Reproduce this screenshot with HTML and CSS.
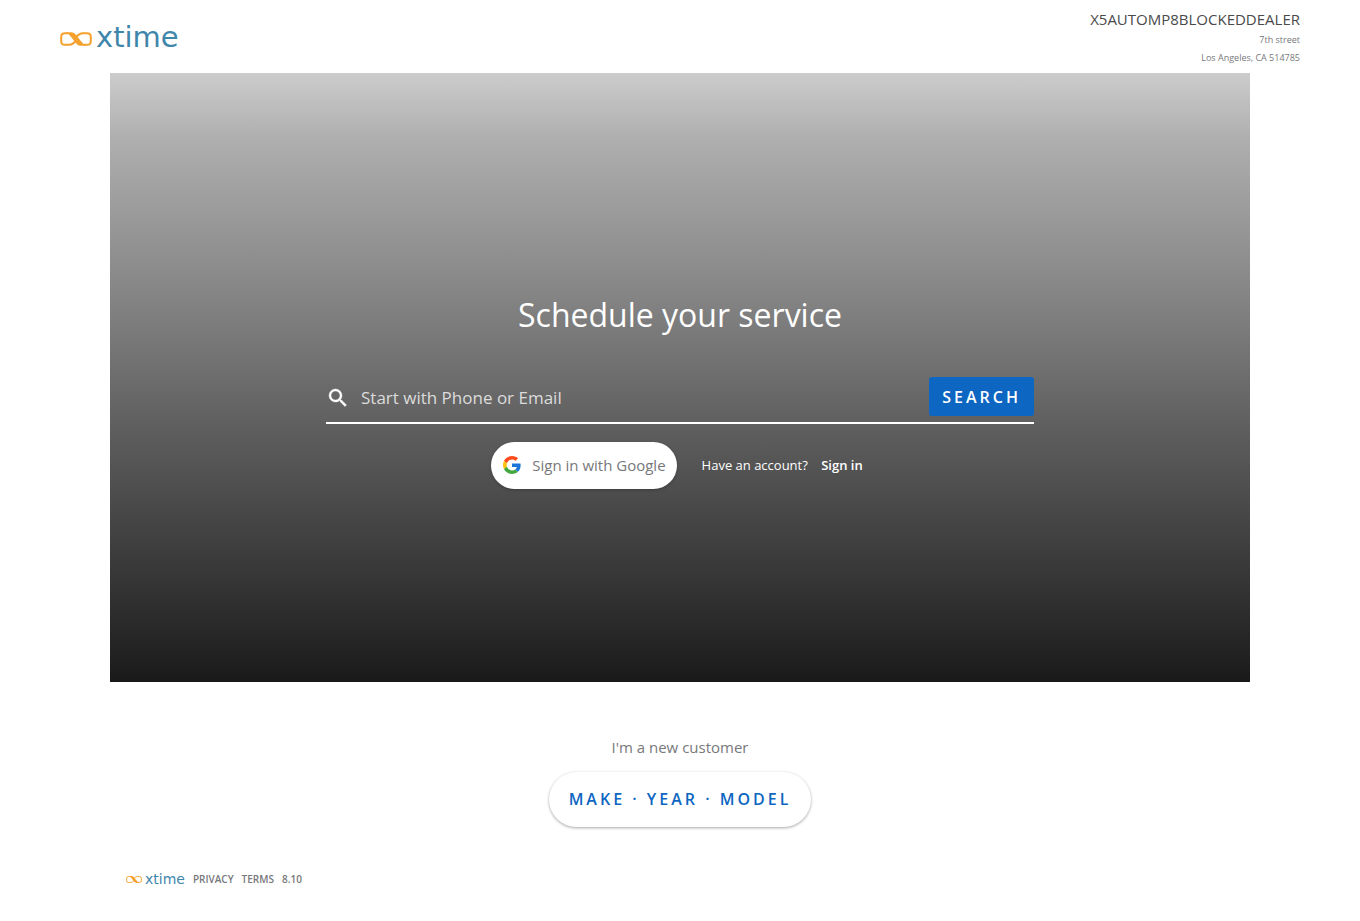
FILE: index.html
```html
<!DOCTYPE html>
<html lang="en">
<head>
<meta charset="utf-8">
<title>Schedule your service</title>
<link rel="stylesheet" href="styles.css">
</head>
<body>
<svg class="defs" aria-hidden="true">
  <symbol id="loop" viewBox="0 0 32 14">
    <path d="M8 1.200H5Q1.200 1.200 1.200 4.800v4.400Q1.200 12.800 5 12.800H9.500C12 12.800 13.500 11.500 15.500 9.500" fill="none" stroke="#f5a12d" stroke-width="2"/>
    <path d="M24 12.800h3Q30.800 12.800 30.800 9.200v-4.400Q30.800 1.200 27 1.200H22.500C20 1.200 18.500 2.500 16.500 4.500" fill="none" stroke="#f5a12d" stroke-width="2"/>
    <path d="M6 .2H11.500C16.500 .2 19.500 9.500 26 13.800H20.500C15.500 13.800 12.500 4 6 .2z" fill="#f5a12d"/>
  </symbol>
</svg>
<header class="top">
  <div class="logo"><svg class="loop" aria-hidden="true"><use href="#loop"/></svg><span>xtime</span></div>
  <address class="dealer">
    <span class="dealer-name">X5AUTOMP8BLOCKEDDEALER</span>
    <span>7th street</span>
    <span>Los Angeles, CA 514785</span>
  </address>
</header>
<main>
  <section class="hero">
    <h1>Schedule your service</h1>
    <form class="search">
      <label for="q" aria-label="Phone or Email"><svg class="glass" viewBox="0 0 24 24" aria-hidden="true"><path fill="#fff" stroke="#fff" stroke-width=".4" d="M15.500 14h-.79l-.28-.27A6.470 6.470 0 0 0 16 9.500 6.500 6.500 0 1 0 9.500 16c1.610 0 3.090-.59 4.230-1.570l.27.28v.79l5 4.990L20.490 19l-4.990-5zm-6 0C7.010 14 5 11.990 5 9.500S7.010 5 9.500 5 14 7.010 14 9.500 11.990 14 9.500 14z"/></svg></label>
      <input id="q" type="text" placeholder="Start with Phone or Email">
      <button type="button" class="go">SEARCH</button>
    </form>
    <div class="signin">
      <button type="button" class="google">
        <svg class="g" viewBox="0 0 48 48" aria-hidden="true"><path fill="#ff4a1c" d="M24 9.500c3.540 0 6.710 1.220 9.210 3.600l6.850-6.850C35.900 2.380 30.470 0 24 0 14.620 0 6.510 5.380 2.560 13.220l7.980 6.190C12.430 13.720 17.740 9.500 24 9.500z"/><path fill="#1a73d9" d="M46.980 24.550c0-1.570-.15-3.090-.38-4.550H24v9.020h12.940c-.58 2.960-2.260 5.480-4.780 7.180l7.730 6c4.510-4.180 7.090-10.360 7.090-17.650z"/><path fill="#ffc107" d="M10.530 28.590A14.500 14.500 0 0 1 9.770 24c0-1.600.27-3.140.76-4.590l-7.980-6.190A23.900 23.900 0 0 0 0 24c0 3.880.92 7.540 2.560 10.780z"/><path fill="#43a83f" d="M24 48c6.480 0 11.930-2.130 15.890-5.810l-7.730-6C30.010 37.640 27.240 38.490 24 38.490c-6.260 0-11.570-4.220-13.470-9.910l-7.980 6.190C6.510 42.620 14.620 48 24 48z"/></svg>
        Sign in with Google
      </button>
      <p class="account">Have an account? <a href="#signin">Sign in</a></p>
    </div>
  </section>
  <section class="new">
    <p>I'm a new customer</p>
    <button type="button" class="vehicle">MAKE · YEAR · MODEL</button>
  </section>
</main>
<footer class="foot">
  <div class="logo small"><svg class="loop" aria-hidden="true"><use href="#loop"/></svg><span>xtime</span></div>
  <a href="#privacy">PRIVACY</a>
  <a href="#terms">TERMS</a>
  <span>8.10</span>
</footer>
</body>
</html>
```
FILE: styles.css
```css
* { box-sizing: border-box; }
body { margin: 0; font-family: "Open Sans", sans-serif; color: #77787b; background: #fff; }
p, h1 { margin: 0; }
a { color: inherit; text-decoration: none; }
button { border: 0; font-family: inherit; cursor: pointer; }
.defs { position: absolute; width: 0; height: 0; }

.top { display: flex; justify-content: space-between; padding: 8px 60px 6px; }
.logo { display: flex; align-items: center; gap: 4px; color: #3f86ab; font: 29px/28px "DejaVu Sans", sans-serif; }
.top .logo { height: 58px; }
.loop { width: 32px; height: 14px; margin-top: 4px; }
.dealer { display: flex; flex-direction: column; align-items: flex-end; font-style: normal; font-size: 9px; line-height: 18px; }
.dealer-name { margin-bottom: 1px; font-size: 15px; line-height: 22px; color: #4a4a4a; }

.hero {
  display: flex; flex-direction: column; align-items: center;
  margin: 0 110px; padding: 218px 24px 193px; color: #fff;
  background: linear-gradient(#ccc, #aeaeae 11%, #878787 35%, #5f5f5f 58%, #4b4b4b 70%, #212121 96%, #191919);
}
h1 { font-size: 32px; line-height: 48px; font-weight: 400; }
.search { display: flex; align-items: center; width: 100%; max-width: 708px; margin-top: 38px; padding-bottom: 6px; border-bottom: 2px solid #fff; }
.search label { display: flex; padding-top: 2px; }
.glass { width: 24px; height: 24px; }
.search input { flex: 1; min-width: 0; padding: 2px 11px 0; border: 0; outline: 0; background: none; color: #fff; font: 17px/24px "Open Sans", sans-serif; }
.search input::placeholder { color: #dcdcdc; opacity: 1; }
.go { height: 39px; padding: 0 13px; border-radius: 3px; background: #0d66c2; color: #fff; font-size: 16px; font-weight: 600; letter-spacing: 3px; }
.signin { display: flex; align-items: center; justify-content: center; gap: 25px; margin-top: 18px; padding-right: 6px; }
.google { display: flex; align-items: center; gap: 11px; height: 47px; padding: 0 11px 2px 12px; border-radius: 24px; background: #fff; color: #77787b; font-size: 15px; box-shadow: 0 1px 3px rgba(0, 0, 0, .25); }
.g { width: 18px; height: 18px; }
.account { padding-bottom: 2px; font-size: 13px; line-height: 18px; }
.account a { margin-left: 10px; font-weight: 600; }

.new { display: flex; flex-direction: column; align-items: center; padding-top: 54px; font-size: 15px; line-height: 22px; }
.vehicle { height: 55px; margin-top: 14px; padding: 0 20px 2px; border-radius: 28px; background: #fff; color: #0d66c2; font-size: 16px; font-weight: 600; letter-spacing: 3px; box-shadow: 0 1px 3px rgba(0, 0, 0, .35); }

.foot { display: flex; align-items: center; gap: 8px; padding: 44px 126px 20px; font-size: 10px; line-height: 16px; font-weight: 600; }
.small { gap: 3px; font-size: 14px; line-height: 16px; }
.small .loop { width: 16px; height: 7px; margin-top: 1px; }
```
